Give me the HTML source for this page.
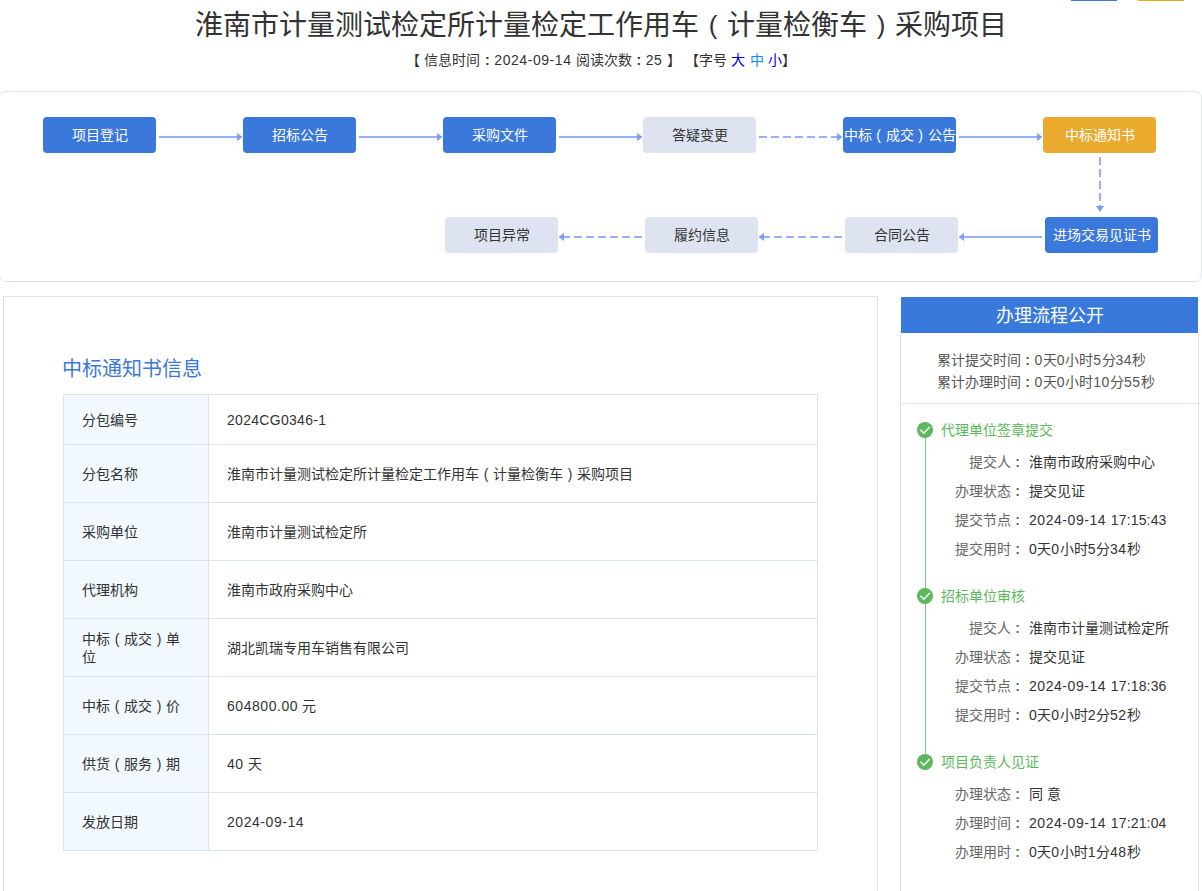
<!DOCTYPE html>
<html lang="zh-CN">
<head>
<meta charset="utf-8">
<title>淮南市计量测试检定所计量检定工作用车（计量检衡车）采购项目</title>
<style>
*{box-sizing:border-box;margin:0;padding:0}
html,body{width:1202px;height:891px;overflow:hidden;background:#fff}
body{font-family:"Liberation Sans",sans-serif;font-size:14px;color:#333;position:relative}
.abs{position:absolute}
.topbtn{position:absolute;top:0;height:1px}
h1{position:absolute;left:0;width:1202px;top:5px;height:42px;line-height:42px;text-align:center;font-size:28px;font-weight:normal;color:#333;white-space:nowrap}
.meta{word-spacing:.4px;position:absolute;left:0;width:1202px;top:49px;height:22px;line-height:22px;text-align:center;font-size:14px;color:#333;white-space:nowrap}
.meta a{color:#0000ee;text-decoration:none}
.flow{position:absolute;left:-1px;top:91px;width:1203px;height:191px;border:1px solid #dde3ea;border-radius:7px;background:#fff}
.node{position:absolute;width:113px;height:36px;line-height:36px;border-radius:4px;text-align:center;font-size:14px;color:#fff;background:#3a78dc;white-space:nowrap}
.node.gray{background:#dee3f2;color:#333}
.node.orange{background:#eaaa2e}
svg.arrows{position:absolute;left:0;top:0;width:1202px;height:891px;pointer-events:none}
.left{position:absolute;left:3px;top:296px;width:875px;height:620px;border:1px solid #dde3ea;background:#fff}
.left h2{position:absolute;left:58px;top:57px;font-size:20px;line-height:30px;font-weight:normal;color:#3a78dc;white-space:nowrap}
table.info{position:absolute;left:59px;top:97px;width:755px;border-collapse:collapse;table-layout:fixed}
table.info td{border:1px solid #dde3ea;height:58px;padding:0 18px;font-size:14px;line-height:18px;color:#333;vertical-align:middle}
table.info tr:first-child td{height:50px}
table.info td.k{width:145px;background:#f1f8fe}
.right{position:absolute;left:900px;top:296px;width:299px;height:620px;border:1px solid transparent;background:#fff}
.right .body{position:absolute;left:-1px;top:36px;width:299px;height:600px;border-left:1px solid #dde3ea;border-right:1px solid #dde3ea}
.right .hd{position:absolute;left:0;top:0;width:297px;height:36px;line-height:39px;overflow:hidden;background:#3879db;color:#fff;font-size:18px;text-align:center}
.right .sum{position:absolute;left:35.5px;top:52px;font-size:14px;line-height:22px;color:#555;white-space:nowrap}
.right .hr{position:absolute;left:0;top:106px;width:297px;height:1px;background:#dde3ea}
.vline{position:absolute;left:24px;top:141px;width:1px;height:316px;background:#7cc886}
.step{position:absolute;left:0;width:297px}
.dot{position:absolute;left:16px;top:0;width:16px;height:16px;border-radius:50%;background:#5cb85c}
.st{position:absolute;left:39.5px;top:-3px;font-size:14px;line-height:22px;color:#5cb85c;white-space:nowrap}
.row{position:absolute;left:0;width:297px;height:22px;line-height:22px;font-size:14px;white-space:nowrap}
.row .l{position:absolute;right:173.5px;color:#666}
.row .v{position:absolute;left:128px;color:#333}
.p{display:inline-block;width:1em;text-align:center}
.c{font-weight:bold}
h1 .p{font-size:26px;width:28px;position:relative;top:-1px}
.n{letter-spacing:.55px}
.t{letter-spacing:.15px;margin-left:.8px}
</style>
</head>
<body>
<div class="topbtn" style="left:1071px;width:46px;background:#3a78dc"></div>
<div class="topbtn" style="left:1138px;width:46px;background:#f0a818"></div>
<h1>淮南市计量测试检定所计量检定工作用车<span class="p">(</span>计量检衡车<span class="p">)</span>采购项目</h1>
<div class="meta">【 信息时间<span class="p c">:</span><span class="n">2024-09-14</span> 阅读次数<span class="p c">:</span><span class="n">25</span> 】 【字号 <a>大</a> <a style="color:#0a8fff">中</a> <a>小</a>】</div>

<div class="flow"></div>
<div class="node" style="left:43px;top:117px">项目登记</div>
<div class="node" style="left:243px;top:117px">招标公告</div>
<div class="node" style="left:443px;top:117px">采购文件</div>
<div class="node gray" style="left:643px;top:117px">答疑变更</div>
<div class="node" style="left:843px;top:117px">中标<span class="p">(</span>成交<span class="p">)</span>公告</div>
<div class="node orange" style="left:1043px;top:117px">中标通知书</div>
<div class="node" style="left:1045px;top:217px">进场交易见证书</div>
<div class="node gray" style="left:845px;top:217px">合同公告</div>
<div class="node gray" style="left:645px;top:217px">履约信息</div>
<div class="node gray" style="left:445px;top:217px">项目异常</div>

<svg class="arrows" viewBox="0 0 1202 891"><line x1="159" y1="137" x2="238.0" y2="137" stroke="#96b1f5" stroke-width="2"/><polygon points="237.0,133 242.5,137 237.0,141" fill="#7d9ef0"/><line x1="359" y1="137" x2="438.0" y2="137" stroke="#96b1f5" stroke-width="2"/><polygon points="437.0,133 442.5,137 437.0,141" fill="#7d9ef0"/><line x1="559" y1="137" x2="638.0" y2="137" stroke="#96b1f5" stroke-width="2"/><polygon points="637.0,133 642.5,137 637.0,141" fill="#7d9ef0"/><line x1="759" y1="137" x2="838.0" y2="137" stroke="#96b1f5" stroke-width="2" stroke-dasharray="8 4"/><polygon points="837.0,133 842.5,137 837.0,141" fill="#7d9ef0"/><line x1="959" y1="137" x2="1038.0" y2="137" stroke="#96b1f5" stroke-width="2"/><polygon points="1037.0,133 1042.5,137 1037.0,141" fill="#7d9ef0"/><line x1="1100" y1="157" x2="1100" y2="207" stroke="#96b1f5" stroke-width="2" stroke-dasharray="8 4"/><polygon points="1096,206 1104,206 1100,212" fill="#7d9ef0"/><line x1="1042" y1="237" x2="963.0" y2="237" stroke="#96b1f5" stroke-width="2"/><polygon points="964.0,233 958.5,237 964.0,241" fill="#7d9ef0"/><line x1="842" y1="237" x2="763.0" y2="237" stroke="#96b1f5" stroke-width="2" stroke-dasharray="8 4"/><polygon points="764.0,233 758.5,237 764.0,241" fill="#7d9ef0"/><line x1="642" y1="237" x2="563.0" y2="237" stroke="#96b1f5" stroke-width="2" stroke-dasharray="8 4"/><polygon points="564.0,233 558.5,237 564.0,241" fill="#7d9ef0"/></svg>
<div class="left">
  <h2>中标通知书信息</h2>
  <table class="info">
    <tr><td class="k">分包编号</td><td><span style="letter-spacing:.3px">2024CG0346-1</span></td></tr>
    <tr><td class="k">分包名称</td><td>淮南市计量测试检定所计量检定工作用车<span class="p">(</span>计量检衡车<span class="p">)</span>采购项目</td></tr>
    <tr><td class="k">采购单位</td><td>淮南市计量测试检定所</td></tr>
    <tr><td class="k">代理机构</td><td>淮南市政府采购中心</td></tr>
    <tr><td class="k">中标<span class="p">(</span>成交<span class="p">)</span>单位</td><td>湖北凯瑞专用车销售有限公司</td></tr>
    <tr><td class="k">中标<span class="p">(</span>成交<span class="p">)</span>价</td><td><span class="n">604800.00</span> 元</td></tr>
    <tr><td class="k">供货<span class="p">(</span>服务<span class="p">)</span>期</td><td><span class="n">40</span> 天</td></tr>
    <tr><td class="k">发放日期</td><td><span class="n">2024-09-14</span></td></tr>
  </table>
</div>

<div class="right">
  <div class="hd">办理流程公开</div><div class="body"></div>
  <div class="sum">累计提交时间<span class="p c">:</span><span class="n">0</span>天<span class="n">0</span>小时<span class="n">5</span>分<span class="n">34</span>秒<br>累计办理时间<span class="p c">:</span><span class="n">0</span>天<span class="n">0</span>小时<span class="n">10</span>分<span class="n">55</span>秒</div>
  <div class="hr"></div>
<div class="vline"></div>
<div class="step" style="top:125px"><div class="dot"><svg width="16" height="16" viewBox="0 0 16 16"><path d="M3.4 7.8 L6.8 11.2 L12.8 5" fill="none" stroke="#fff" stroke-width="1.6"/></svg></div><div class="st">代理单位签章提交</div><div class="row" style="top:29px"><span class="l">提交人<span class="p c">:</span></span><span class="v">淮南市政府采购中心</span></div><div class="row" style="top:58px"><span class="l">办理状态<span class="p c">:</span></span><span class="v">提交见证</span></div><div class="row" style="top:87px"><span class="l">提交节点<span class="p c">:</span></span><span class="v"><span class="n">2024-09-14</span> <span class="t">17:15:43</span></span></div><div class="row" style="top:116px"><span class="l">提交用时<span class="p c">:</span></span><span class="v"><span class="n">0</span>天<span class="n">0</span>小时<span class="n">5</span>分<span class="n">34</span>秒</span></div></div>
<div class="step" style="top:291px"><div class="dot"><svg width="16" height="16" viewBox="0 0 16 16"><path d="M3.4 7.8 L6.8 11.2 L12.8 5" fill="none" stroke="#fff" stroke-width="1.6"/></svg></div><div class="st">招标单位审核</div><div class="row" style="top:29px"><span class="l">提交人<span class="p c">:</span></span><span class="v">淮南市计量测试检定所</span></div><div class="row" style="top:58px"><span class="l">办理状态<span class="p c">:</span></span><span class="v">提交见证</span></div><div class="row" style="top:87px"><span class="l">提交节点<span class="p c">:</span></span><span class="v"><span class="n">2024-09-14</span> <span class="t">17:18:36</span></span></div><div class="row" style="top:116px"><span class="l">提交用时<span class="p c">:</span></span><span class="v"><span class="n">0</span>天<span class="n">0</span>小时<span class="n">2</span>分<span class="n">52</span>秒</span></div></div>
<div class="step" style="top:457px"><div class="dot"><svg width="16" height="16" viewBox="0 0 16 16"><path d="M3.4 7.8 L6.8 11.2 L12.8 5" fill="none" stroke="#fff" stroke-width="1.6"/></svg></div><div class="st">项目负责人见证</div><div class="row" style="top:29px"><span class="l">办理状态<span class="p c">:</span></span><span class="v">同 意</span></div><div class="row" style="top:58px"><span class="l">办理时间<span class="p c">:</span></span><span class="v"><span class="n">2024-09-14</span> <span class="t">17:21:04</span></span></div><div class="row" style="top:87px"><span class="l">办理用时<span class="p c">:</span></span><span class="v"><span class="n">0</span>天<span class="n">0</span>小时<span class="n">1</span>分<span class="n">48</span>秒</span></div></div>
</div>
</body>
</html>
